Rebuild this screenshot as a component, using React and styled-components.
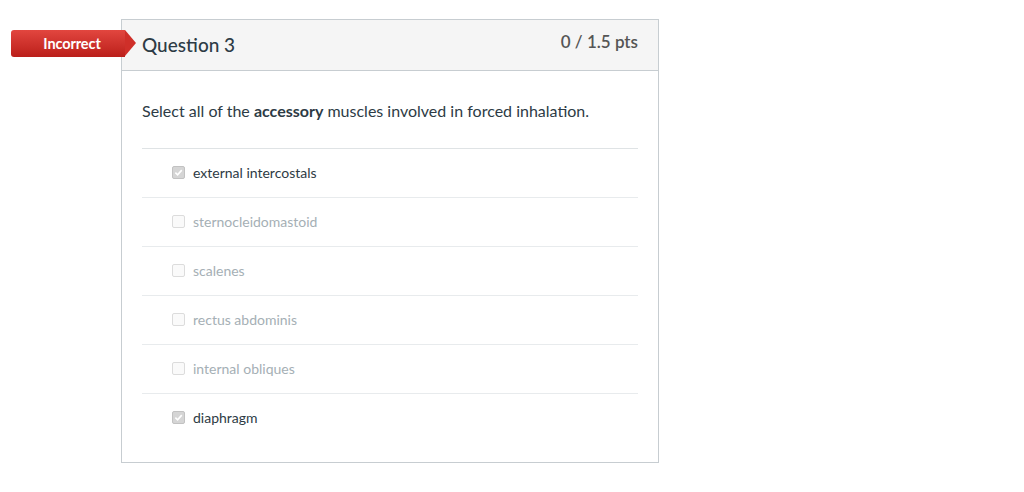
import styled, { createGlobalStyle } from "styled-components"

const Global = createGlobalStyle`
    body {
        margin: 0;
        background: #fff;
        font-family: Lato, "Open Sans", sans-serif;
        color: #2d3b45;
    }
`

const Page = styled.div`
    padding: 19px 0 0 121px;
`

const Card = styled.div`
    position: relative;
    width: 536px;
    border: 1px solid #c7cdd1;
    background: #fff;
`

const Header = styled.div`
    display: flex;
    justify-content: space-between;
    align-items: flex-start;
    height: 50px;
    padding: 0 20px;
    background: #f5f5f5;
    border-bottom: 1px solid #c7cdd1;
`

const Title = styled.h2`
    margin: 13px 0 0;
    font-size: 19px;
    font-weight: 500;
    color: #2d3b45;
`

const Points = styled.div`
    margin-top: 11px;
    font-size: 17px;
    font-weight: 600;
    color: #555;
`

const Badge = styled.div`
    position: absolute;
    left: -111px;
    top: 10px;
    width: 114px;
    height: 27px;
    display: flex;
    align-items: center;
    justify-content: center;
    padding-left: 8px;
    box-sizing: border-box;
    background: linear-gradient(#e2463f, #bb1f1a);
    border-radius: 3px 0 0 3px;
    color: #fff;
    font-size: 14.5px;
    font-weight: 700;
    letter-spacing: -0.1px;
    &::after {
        content: "";
        position: absolute;
        right: -11px;
        top: 0;
        border-top: 13.5px solid transparent;
        border-bottom: 13.5px solid transparent;
        border-left: 11px solid #cf2f29;
    }
`

const Body = styled.div`
    padding: 29px 20px 20px;
`

const Prompt = styled.p`
    margin: 0 0 26px;
    font-size: 16px;
    color: #2d3b45;
    line-height: 22px;
`

const Answers = styled.div`
    border-top: 1px solid #dfe3e5;
`

const Answer = styled.div`
    display: flex;
    align-items: center;
    height: 46px;
    padding: 0 0 2px 30px;
    border-bottom: ${props => props.last ? "none" : "1px solid #e8ebed"};
    font-size: 14px;
    color: ${props => props.checked ? "#2d3b45" : "#a5afb5"};
`

const Box = styled.span`
    width: 11px;
    height: 11px;
    margin-right: 8px;
    border: 1px solid ${props => props.checked ? "#c2c2c2" : "#dcdcdc"};
    border-radius: 2px;
    background: ${props => props.checked ? "#d5d5d5" : "#fafafa"};
    display: flex;
    align-items: center;
    justify-content: center;
`

const answers = [
    { id: 1, text: "external intercostals", checked: true },
    { id: 2, text: "sternocleidomastoid", checked: false },
    { id: 3, text: "scalenes", checked: false },
    { id: 4, text: "rectus abdominis", checked: false },
    { id: 5, text: "internal obliques", checked: false },
    { id: 6, text: "diaphragm", checked: true },
]

const App = () => {
    return (
        <Page>
            <Global />
            <Card>
                <Badge>Incorrect</Badge>
                <Header>
                    <Title>Question 3</Title>
                    <Points>0 / 1.5 pts</Points>
                </Header>
                <Body>
                    <Prompt>Select all of the <b>accessory</b> muscles involved in forced inhalation.</Prompt>
                    <Answers>
                        {answers.map((item, i) => (
                            <Answer key={item.id} checked={item.checked} last={i === answers.length - 1}>
                                <Box checked={item.checked}>
                                    {item.checked && (
                                        <svg width="9" height="9" viewBox="0 0 10 10">
                                            <path d="M1.5 5.2 L4 7.6 L8.6 2.4" fill="none" stroke="#fff" strokeWidth="1.8" />
                                        </svg>
                                    )}
                                </Box>
                                {item.text}
                            </Answer>
                        ))}
                    </Answers>
                </Body>
            </Card>
        </Page>
    )
}

export default App
